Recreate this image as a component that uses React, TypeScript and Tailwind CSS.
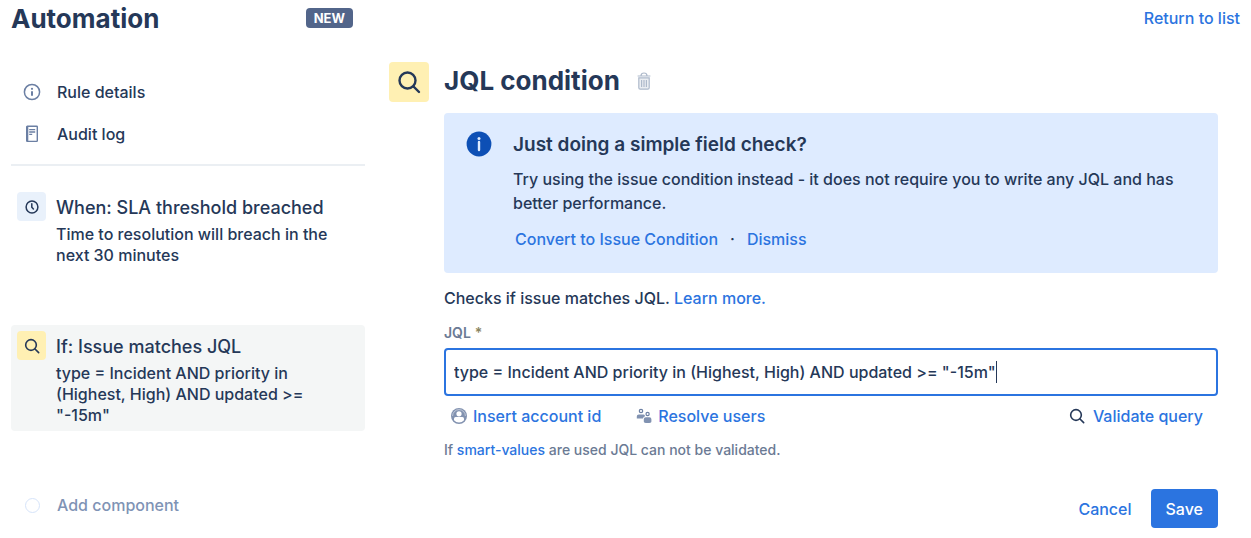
import { useState } from "react";
import type { ReactNode } from "react";

type IconProps = { className?: string };

function SearchIcon({ className }: IconProps) {
  return (
    <svg viewBox="0 0 24 24" fill="none" stroke="currentColor" strokeWidth="2.4" strokeLinecap="round" className={className} aria-hidden="true">
      <circle cx="10.5" cy="10.5" r="8" />
      <path d="M16.5 16.5 22 22" />
    </svg>
  );
}

function InfoIcon({ className }: IconProps) {
  return (
    <svg viewBox="0 0 18 18" fill="none" stroke="currentColor" strokeWidth="1.5" className={className} aria-hidden="true">
      <circle cx="9" cy="9" r="7.6" />
      <path d="M9 8.2v4.6" strokeWidth="2" />
      <circle cx="9" cy="5.8" r="1.1" fill="currentColor" stroke="none" />
    </svg>
  );
}

function LogIcon({ className }: IconProps) {
  return (
    <svg viewBox="0 0 18 18" fill="none" stroke="currentColor" strokeWidth="1.4" className={className} aria-hidden="true">
      <rect x="3.7" y="1.2" width="10.6" height="15.2" rx="0.6" />
      <path d="M4.6 1.2v15.2" />
      <path d="M6.2 4.6h6M6.2 7h6M6.2 9.4h3" />
    </svg>
  );
}

function ClockIcon({ className }: IconProps) {
  return (
    <svg viewBox="0 0 14 14" fill="none" stroke="currentColor" strokeWidth="1.5" strokeLinecap="round" className={className} aria-hidden="true">
      <circle cx="7" cy="7" r="5.9" />
      <path d="M6.8 3.8v3.4l1.6 1.8" />
    </svg>
  );
}

function TrashIcon({ className }: IconProps) {
  return (
    <svg viewBox="0 0 14 18" fill="none" stroke="currentColor" strokeWidth="1.2" className={className} aria-hidden="true">
      <path d="M0.6 4h12.8M4 3.6Q4.2 1 7 1t3 2.6" />
      <path d="M1.8 5.8h10.4v10q0 1.4-1.4 1.4H3.2q-1.4 0-1.4-1.4z" fill="currentColor" fillOpacity="0.25" />
      <path d="M4.6 8v7M7 8v7M9.4 8v7" />
    </svg>
  );
}

function PersonIcon({ className }: IconProps) {
  return (
    <svg viewBox="0 0 16 16" className={className} aria-hidden="true">
      <circle cx="8" cy="8" r="8" fill="currentColor" />
      <circle cx="8" cy="5.8" r="2.6" fill="#fff" />
      <path d="M3 12.2V10.6Q3 8.9 4.7 8.9h6.6q1.7 0 1.7 1.7v1.6Q11 14.6 8 14.6t-5-2.4z" fill="#fff" />
      <path d="M1.6 8a6.4 6.4 0 0 1 12.8 0" fill="none" stroke="#fff" strokeWidth="0.7" strokeOpacity="0.7" />
    </svg>
  );
}

function PeopleIcon({ className }: IconProps) {
  return (
    <svg viewBox="0 0 16 16" fill="currentColor" className={className} aria-hidden="true">
      <circle cx="5" cy="3" r="1.7" fill="none" stroke="currentColor" strokeWidth="1.2" />
      <circle cx="11.6" cy="6" r="1.6" fill="none" stroke="currentColor" strokeWidth="1.2" />
      <path d="M.8 10.6V8.4q0-2 2-2h4.6q.8 0 1.4.6v1.6q-1.6.4-1.8 2z" fillOpacity="0.85" />
      <path d="M7.8 13.4v-2.2q0-2 2-2h3.6q2 0 2 2v2.2q0 1.6-3.8 1.6t-3.8-1.6z" fillOpacity="0.85" />
    </svg>
  );
}

function InfoBadge({ className }: IconProps) {
  return (
    <svg viewBox="0 0 26 26" className={className} aria-hidden="true">
      <circle cx="13" cy="13" r="12.4" fill="#0d4fb5" />
      <circle cx="13" cy="7.6" r="1.5" fill="#deebff" />
      <path d="M13 11v8" stroke="#deebff" strokeWidth="2.4" strokeLinecap="round" />
    </svg>
  );
}

type StepProps = {
  icon: ReactNode;
  tile: string;
  title: string;
  detail: string;
  selected?: boolean;
};

function Step({ icon, tile, title, detail, selected }: StepProps) {
  return (
    <button
      type="button"
      className={`flex w-full gap-2.5 rounded px-1.5 pt-1.5 pb-[5px] text-left ${selected ? "bg-[#f4f6f6]" : ""}`}
    >
      <span className={`flex size-[29px] shrink-0 items-center justify-center rounded-sm ${tile}`}>{icon}</span>
      <span className="flex min-w-0 flex-col pt-1 pr-5">
        <span className="text-lg leading-6">{title}</span>
        <span className="pt-1 text-base leading-[21px]">{detail}</span>
      </span>
    </button>
  );
}

const link = "text-[#2b74e0] hover:underline";

export default function App() {
  const [query, setQuery] = useState('type = Incident AND priority in (Highest, High) AND updated >= "-15m"');

  return (
    <div className="bg-white px-[11px] pb-2 font-['Inter','Liberation_Sans',sans-serif] text-base font-medium text-[#253858]">
      <header className="flex items-center">
        <div className="flex w-[342px] items-center justify-between">
          <h1 className="pt-0.5 text-[26px] leading-[34px] font-bold">Automation</h1>
          <span className="rounded bg-[#52658a] px-2 text-[13px] leading-5 font-bold text-white">NEW</span>
        </div>
        <a href="#rules" className={`ml-auto ${link}`}>Return to list</a>
      </header>

      <div className="flex gap-6 pt-[26px]">
        <aside className="w-[354px] shrink-0 pt-[18px]">
          <nav className="flex flex-col gap-[18px] border-b-2 border-[#ebeff3] pb-[18px] pl-3">
            <a href="#details" className="flex items-center gap-4">
              <InfoIcon className="size-[18px] text-[#6b7fa3]" />
              Rule details
            </a>
            <a href="#audit" className="flex items-center gap-4">
              <LogIcon className="size-[18px] text-[#6b7fa3]" />
              Audit log
            </a>
          </nav>

          <div className="flex flex-col gap-[54px] pt-5">
            <Step
              icon={<ClockIcon className="size-3.5" />}
              tile="bg-[#e9f1fb]"
              title="When: SLA threshold breached"
              detail="Time to resolution will breach in the next 30 minutes"
            />
            <Step
              selected
              icon={<SearchIcon className="size-4" />}
              tile="bg-[#fff0b3]"
              title="If: Issue matches JQL"
              detail='type = Incident AND priority in (Highest, High) AND updated >= "-15m"'
            />
          </div>

          <button type="button" className="mt-[62px] flex items-center gap-4 pl-3 text-[#7f93b5]">
            <span className="flex size-[18px] items-center justify-center">
              <span className="size-[15px] rounded-full border border-[#d6e4fa]" />
            </span>
            Add component
          </button>
        </aside>

        <main className="flex min-w-0 flex-1 gap-[15px] pr-[22px]">
          <span className="flex size-10 shrink-0 items-center justify-center rounded bg-[#fff0b3]">
            <SearchIcon className="size-6" />
          </span>
          <div className="min-w-0 flex-1">
            <div className="flex h-[38px] items-center gap-[17px]">
              <h2 className="text-[26px] leading-9 font-bold">JQL condition</h2>
              <button type="button" aria-label="Delete condition" className="text-[#aebacb]">
                <TrashIcon className="h-[18px] w-3.5" />
              </button>
            </div>

            <section className="mt-[13px] flex gap-[21px] rounded-sm bg-[#deebff] px-[22px] pt-[18px] pb-[22px]">
              <InfoBadge className="size-[26px] shrink-0" />
              <div className="min-w-0">
                <h3 className="text-[19px] leading-7 font-semibold">Just doing a simple field check?</h3>
                <p className="pt-2 leading-6">
                  Try using the issue condition instead - it does not require you to write any JQL and has better performance.
                </p>
                <div className="flex gap-3 pt-3 pl-0.5 leading-6">
                  <button type="button" className={link}>Convert to Issue Condition</button>
                  <span>·</span>
                  <button type="button" className={link}>Dismiss</button>
                </div>
              </div>
            </section>

            <p className="pt-[13px] leading-6">
              Checks if issue matches JQL. <a href="#learn" className={link}>Learn more.</a>
            </p>

            <label htmlFor="jql" className="mt-[13px] block text-sm leading-5 font-semibold text-[#6b7a94]">
              JQL<span className="pl-1 text-[#8a8460]">*</span>
            </label>
            <div className="mt-[5px] flex h-12 items-center rounded border-2 border-[#2b74e0] px-2">
              <input
                id="jql"
                value={query}
                onChange={(event) => setQuery(event.target.value)}
                className="max-w-full field-sizing-content caret-transparent outline-none"
              />
              <span className="h-[22px] w-px bg-[#253858]" />
            </div>

            <div className="flex items-center pt-2 pr-[15px] pl-[7px] leading-6">
              <button type="button" className={`flex items-center gap-1.5 ${link}`}>
                <PersonIcon className="size-4 text-[#8292b0]" />
                Insert account id
              </button>
              <button type="button" className={`ml-[35px] flex items-center gap-1.5 ${link}`}>
                <PeopleIcon className="size-4 text-[#6b7fa3]" />
                Resolve users
              </button>
              <button type="button" className={`ml-auto flex items-center gap-2 ${link}`}>
                <SearchIcon className="size-4 text-[#253858]" />
                Validate query
              </button>
            </div>

            <p className="pt-3 text-sm leading-5 text-[#6b7a94]">
              If <a href="#smart-values" className={link}>smart-values</a> are used JQL can not be validated.
            </p>

            <div className="flex justify-end gap-[3px] pt-[29px]">
              <button type="button" className={`h-[39px] px-4 ${link}`}>Cancel</button>
              <button type="button" className="h-[39px] rounded-sm bg-[#2b74e0] px-[15px] text-white">Save</button>
            </div>
          </div>
        </main>
      </div>
    </div>
  );
}
